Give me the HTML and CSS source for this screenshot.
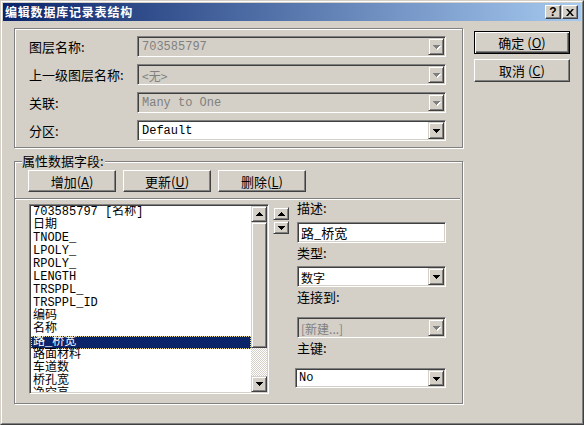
FILE: index.html
```html
<!DOCTYPE html>
<html lang="zh-CN">
<head>
  <meta charset="UTF-8" />
  <title>编辑数据库记录表结构</title>
  <link rel="stylesheet" href="styles.css">
</head>
<body>

  <div class="window">
    <div class="frame">

      <!-- Title bar -->
      <div class="titlebar">
        <span class="title">编辑数据库记录表结构</span>
        <span class="cap-btn help">?</span>
        <span class="cap-btn close">
          <svg width="8" height="7" viewBox="0 0 8 7"><path d="M0 0h2l2 2.4 2-2.4h2l-3 3.5 3 3.5h-2l-2-2.4-2 2.4h-2l3-3.5z" fill="#000"/></svg>
        </span>
      </div>

      <div class="client">
        <div class="main">

          <!-- Layer info -->
          <div class="group group-layer">
            <div class="form-grid">
              <span class="label">图层名称:</span>
              <div class="combo disabled">
                <span class="value mono">703585797</span>
                <span class="drop"><svg width="8" height="5" viewBox="0 0 8 5"><path d="M1 1h7v1h-1v1h-1v1h-1v1h-1v-1h-1v-1h-1v-1h-1z" fill="#fff"/><path d="M0 0h7v1h-1v1h-1v1h-1v1h-1v-1h-1v-1h-1v-1h-1z" fill="#808080"/></svg></span>
              </div>

              <span class="label">上一级图层名称:</span>
              <div class="combo disabled">
                <span class="value">&lt;无&gt;</span>
                <span class="drop"><svg width="8" height="5" viewBox="0 0 8 5"><path d="M1 1h7v1h-1v1h-1v1h-1v1h-1v-1h-1v-1h-1v-1h-1z" fill="#fff"/><path d="M0 0h7v1h-1v1h-1v1h-1v1h-1v-1h-1v-1h-1v-1h-1z" fill="#808080"/></svg></span>
              </div>

              <span class="label">关联:</span>
              <div class="combo disabled">
                <span class="value mono">Many to One</span>
                <span class="drop"><svg width="8" height="5" viewBox="0 0 8 5"><path d="M1 1h7v1h-1v1h-1v1h-1v1h-1v-1h-1v-1h-1v-1h-1z" fill="#fff"/><path d="M0 0h7v1h-1v1h-1v1h-1v1h-1v-1h-1v-1h-1v-1h-1z" fill="#808080"/></svg></span>
              </div>

              <span class="label">分区:</span>
              <div class="combo">
                <span class="value mono">Default</span>
                <span class="drop"><svg width="7" height="4" viewBox="0 0 7 4"><path d="M0 0h7v1h-1v1h-1v1h-1v1h-1v-1h-1v-1h-1v-1h-1z" fill="#000"/></svg></span>
              </div>
            </div>
          </div>

          <!-- Attribute fields -->
          <div class="group group-fields">
            <span class="legend">属性数据字段:</span>

            <div class="btn-row">
              <span class="btn">增加(<u>A</u>)</span>
              <span class="btn">更新(<u>U</u>)</span>
              <span class="btn">删除(<u>L</u>)</span>
            </div>

            <div class="sep"></div>

            <div class="fields">
              <div class="listbox">
                <ul class="items">
                  <li>703585797 [名称]</li>
                  <li>日期</li>
                  <li>TNODE_</li>
                  <li>LPOLY_</li>
                  <li>RPOLY_</li>
                  <li>LENGTH</li>
                  <li>TRSPPL_</li>
                  <li>TRSPPL_ID</li>
                  <li>编码</li>
                  <li>名称</li>
                  <li class="selected">路_桥宽</li>
                  <li>路面材料</li>
                  <li>车道数</li>
                  <li>桥孔宽</li>
                  <li>净空高</li>
                </ul>
                <div class="vscroll">
                  <span class="sbtn"><svg width="7" height="4" viewBox="0 0 7 4"><path d="M3 0h1v1h1v1h1v1h1v1h-7v-1h1v-1h1v-1h1z" fill="#000"/></svg></span>
                  <span class="thumb"></span>
                  <span class="track"></span>
                  <span class="sbtn"><svg width="7" height="4" viewBox="0 0 7 4"><path d="M0 0h7v1h-1v1h-1v1h-1v1h-1v-1h-1v-1h-1v-1h-1z" fill="#000"/></svg></span>
                </div>
              </div>

              <div class="move-btns">
                <span class="sbtn small"><svg width="7" height="4" viewBox="0 0 7 4"><path d="M3 0h1v1h1v1h1v1h1v1h-7v-1h1v-1h1v-1h1z" fill="#000"/></svg></span>
                <span class="sbtn small"><svg width="7" height="4" viewBox="0 0 7 4"><path d="M0 0h7v1h-1v1h-1v1h-1v1h-1v-1h-1v-1h-1v-1h-1z" fill="#000"/></svg></span>
              </div>

              <div class="props">
                <span class="plabel first">描述:</span>
                <div class="textbox">路_桥宽</div>

                <span class="plabel">类型:</span>
                <div class="combo">
                  <span class="value">数字</span>
                  <span class="drop"><svg width="7" height="4" viewBox="0 0 7 4"><path d="M0 0h7v1h-1v1h-1v1h-1v1h-1v-1h-1v-1h-1v-1h-1z" fill="#000"/></svg></span>
                </div>

                <span class="plabel">连接到:</span>
                <div class="combo disabled link">
                  <span class="value">[新建...]</span>
                  <span class="drop"><svg width="8" height="5" viewBox="0 0 8 5"><path d="M1 1h7v1h-1v1h-1v1h-1v1h-1v-1h-1v-1h-1v-1h-1z" fill="#fff"/><path d="M0 0h7v1h-1v1h-1v1h-1v1h-1v-1h-1v-1h-1v-1h-1z" fill="#808080"/></svg></span>
                </div>

                <span class="plabel">主键:</span>
                <div class="combo key">
                  <span class="value mono">No</span>
                  <span class="drop"><svg width="7" height="4" viewBox="0 0 7 4"><path d="M0 0h7v1h-1v1h-1v1h-1v1h-1v-1h-1v-1h-1v-1h-1z" fill="#000"/></svg></span>
                </div>
              </div>
            </div>
          </div>

        </div>

        <!-- Dialog buttons -->
        <div class="side">
          <span class="btn btn-default">确定 (<u>O</u>)</span>
          <span class="btn btn-side">取消 (<u>C</u>)</span>
        </div>
      </div>

    </div>
  </div>

</body>
</html>
```

FILE: styles.css
```css
body {
  margin: 0;
  font-family: "Noto Sans CJK SC", sans-serif;
  font-size: 12px;
  color: #000;
}

.mono {
  font-family: "Liberation Mono", "Noto Sans CJK SC", monospace;
}

.window {
  width: 584px;
  height: 425px;
  box-sizing: border-box;
  border: 1px solid;
  border-color: #d4d0c8 #404040 #404040 #d4d0c8;
  background: #d4d0c8;
}

.frame {
  height: 100%;
  box-sizing: border-box;
  border: 1px solid;
  border-color: #fff #808080 #808080 #fff;
  padding: 1px;
}

/* title bar */
.titlebar {
  display: flex;
  align-items: center;
  height: 18px;
  padding: 0 3px 0 2px;
  background: linear-gradient(to right, #0a246a, #a6caf0);
}

.title {
  flex: 1;
  color: #fff;
  font-weight: bold;
  letter-spacing: 0.8px;
  line-height: 18px;
}

.cap-btn {
  display: flex;
  align-items: center;
  justify-content: center;
  width: 16px;
  height: 14px;
  box-sizing: border-box;
  background: #d4d0c8;
  border: 1px solid;
  border-color: #fff #404040 #404040 #fff;
  box-shadow: inset -1px -1px #808080;
}

.cap-btn.help {
  font-family: "Liberation Sans", sans-serif;
  font-weight: bold;
  font-size: 12px;
  line-height: 12px;
}

.cap-btn.close {
  margin-left: 1px;
}

/* client area */
.client {
  display: flex;
  padding: 7px 0 0 11px;
}

.main {
  width: 449px;
}

.group {
  box-sizing: border-box;
  border: 1px solid #808080;
  box-shadow: inset 1px 1px #fff, 1px 1px #fff;
}

.group-layer {
  height: 120px;
  padding: 7px 0 0 14px;
}

.form-grid {
  display: grid;
  grid-template-columns: 108px 309px;
  grid-auto-rows: 21px;
  row-gap: 7px;
  align-items: center;
}

.label,
.legend,
.plabel,
.btn {
  font-size: 13px;
}

.label {
  line-height: 14px;
}

/* combo boxes and text boxes */
.combo,
.textbox {
  display: flex;
  align-items: center;
  height: 21px;
  box-sizing: border-box;
  border: 1px solid;
  border-color: #808080 #fff #fff #808080;
  box-shadow: inset 1px 1px #404040, inset -1px -1px #d4d0c8;
  background: #fff;
  padding: 1px;
}

.combo .value {
  flex: 1;
  padding: 1px 0 0 3px;
  white-space: nowrap;
  line-height: 15px;
}

.combo.disabled {
  background: #d4d0c8;
  color: #808080;
}

.drop {
  display: flex;
  align-items: center;
  justify-content: center;
  width: 16px;
  height: 17px;
  box-sizing: border-box;
  background: #d4d0c8;
  border: 1px solid;
  border-color: #d4d0c8 #404040 #404040 #d4d0c8;
  box-shadow: inset 1px 1px #fff, inset -1px -1px #808080;
}

.drop svg {
  margin: 1px 0 0 1px;
}

/* attribute field group */
.group-fields {
  position: relative;
  height: 243px;
  margin-top: 13px;
}

.legend {
  position: absolute;
  top: -8px;
  left: 7px;
  padding-right: 1px;
  line-height: 14px;
  background: #d4d0c8;
}

.btn-row {
  display: flex;
  gap: 7px;
  margin: 8px 0 0 13px;
}

.btn {
  display: flex;
  align-items: center;
  justify-content: center;
  width: 88px;
  height: 22px;
  box-sizing: border-box;
  background: #d4d0c8;
  border: 1px solid;
  border-color: #fff #404040 #404040 #fff;
  box-shadow: inset -1px -1px #808080;
}

.btn u {
  text-decoration-thickness: 1px;
  text-underline-offset: 1px;
}

.sep {
  width: 445px;
  height: 1px;
  margin-top: 6px;
  background: #808080;
  box-shadow: 0 1px #fff;
}

.fields {
  display: flex;
  align-items: flex-start;
  margin-top: 5px;
  padding-left: 14px;
}

.listbox {
  display: flex;
  width: 240px;
  height: 190px;
  box-sizing: border-box;
  border: 1px solid;
  border-color: #808080 #fff #fff #808080;
  box-shadow: inset 1px 1px #404040, inset -1px -1px #d4d0c8;
  background: #fff;
  padding: 1px;
}

.items {
  flex: 1;
  margin: 0;
  padding: 0;
  list-style: none;
  overflow: hidden;
  font-family: "Liberation Mono", "Noto Sans CJK SC", monospace;
}

.items li {
  height: 13px;
  line-height: 13px;
  padding-left: 2px;
  white-space: nowrap;
}

.items li.selected {
  box-sizing: border-box;
  padding-left: 1px;
  background: #0a246a;
  color: #fff;
  border: 1px dotted #e8d890;
  line-height: 11px;
}

.vscroll {
  display: flex;
  flex-direction: column;
  width: 16px;
}

.sbtn {
  display: flex;
  align-items: center;
  justify-content: center;
  width: 16px;
  height: 16px;
  box-sizing: border-box;
  background: #d4d0c8;
  border: 1px solid;
  border-color: #d4d0c8 #404040 #404040 #d4d0c8;
  box-shadow: inset 1px 1px #fff, inset -1px -1px #808080;
}

.thumb {
  height: 126px;
  box-sizing: border-box;
  background: #d4d0c8;
  border: 1px solid;
  border-color: #d4d0c8 #404040 #404040 #d4d0c8;
  box-shadow: inset 1px 1px #fff, inset -1px -1px #808080;
}

.track {
  height: 28px;
  background: repeating-conic-gradient(#d4d0c8 0 25%, #fff 0 50%) 0 0 / 2px 2px;
}

.move-btns {
  display: flex;
  flex-direction: column;
  gap: 1px;
  margin: 3px 0 0 4px;
}

.sbtn.small {
  height: 13px;
}

/* field properties */
.props {
  display: flex;
  flex-direction: column;
  width: 149px;
  margin: -3px 0 0 8px;
}

.plabel {
  line-height: 14px;
  margin-top: 3px;
}

.plabel.first {
  margin-top: 0;
}

.props .textbox {
  margin-top: 7px;
  padding-left: 3px;
  font-size: 13px;
}

.props .combo {
  margin-top: 6px;
}

.props .combo .value {
  padding-left: 2px;
}

.props .combo.link {
  margin-top: 13px;
}

.props .combo.key {
  margin: 13px 0 0 -2px;
  height: 20px;
}

.props .combo.key .drop {
  height: 16px;
}

/* dialog buttons */
.side {
  display: flex;
  flex-direction: column;
  gap: 5px;
  margin: 3px 0 0 11px;
}

.btn-side {
  width: 96px;
  height: 23px;
}

.btn-default {
  width: 96px;
  height: 23px;
  border-color: #000;
  box-shadow: inset 1px 1px #fff, inset -1px -1px #404040, inset -2px -2px #808080;
}
```
